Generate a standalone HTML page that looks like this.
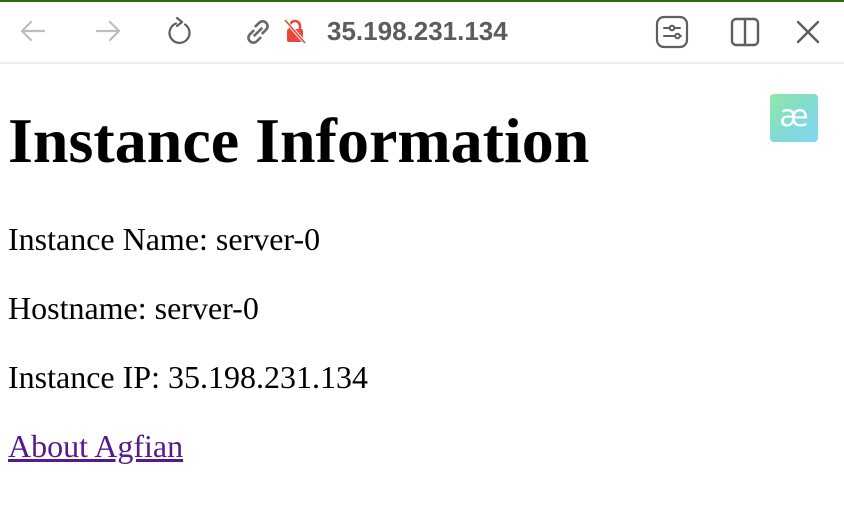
<!DOCTYPE html>
<html><head><meta charset="utf-8">
<style>
html,body{margin:0;padding:0;width:844px;height:520px;overflow:hidden;background:#fff;font-family:"Liberation Serif",serif;}
.top{position:absolute;left:0;top:0;width:844px;height:2px;background:#2d6a0c;}
.bar{position:absolute;left:0;top:2px;width:844px;height:60px;background:#fff;}
.div{position:absolute;left:0;top:62px;width:844px;height:2px;background:#ececec;}
.url{position:absolute;left:327px;top:16px;font-family:"Liberation Sans",sans-serif;font-size:26px;font-weight:bold;color:#5c5c5c;line-height:30px;}
svg{position:absolute;}
.t{position:absolute;left:8px;line-height:1;color:#000;white-space:nowrap;}
h1{margin:0;font-size:64px;font-weight:bold;}
a{color:#551a8b;}
.badge{position:absolute;left:770px;top:94px;width:48px;height:48px;border-radius:4px;background:linear-gradient(135deg,#8ee8a8,#7fd9d8 60%,#86d8f4);color:#fff;font-family:"DejaVu Sans",sans-serif;font-size:30px;text-align:center;line-height:46px;}
</style></head><body>
<div class="top"></div>
<div class="bar"></div>
<div class="div"></div>
<svg style="left:18px;top:18px" width="30" height="26" viewBox="0 0 30 26"><path d="M26 13H4M13 4L4 13l9 9" fill="none" stroke="#bdbdbd" stroke-width="2.2" stroke-linecap="round" stroke-linejoin="round"/></svg>
<svg style="left:93px;top:18px" width="30" height="26" viewBox="0 0 30 26"><path d="M4 13h22M17 4l9 9-9 9" fill="none" stroke="#bdbdbd" stroke-width="2.2" stroke-linecap="round" stroke-linejoin="round"/></svg>
<svg style="left:166px;top:15px" width="30" height="32" viewBox="0 0 30 32"><path d="M19 9.5A10 10 0 1 1 10 8.5" fill="none" stroke="#5e5e5e" stroke-width="2.2" stroke-linecap="round"/><path d="M11 3l5 4-5 4" fill="none" stroke="#5e5e5e" stroke-width="2.2" stroke-linecap="round" stroke-linejoin="round"/></svg>
<svg style="left:243px;top:17px" width="30" height="30" viewBox="0 0 26 26"><g fill="none" stroke="#6a6a6a" stroke-width="2.3" stroke-linecap="round"><path d="M11 8l3-3a4.2 4.2 0 0 1 6 6l-3 3"/><path d="M15 18l-3 3a4.2 4.2 0 0 1-6-6l3-3"/><path d="M10 16l6-6"/></g></svg>
<svg style="left:282px;top:17px" width="26" height="28" viewBox="0 0 26 28"><path d="M8 13V9a5 5 0 0 1 10 0v4" fill="none" stroke="#e8493a" stroke-width="2.6"/><rect x="5" y="12" width="16" height="13" rx="2" fill="#e8493a"/><path d="M3 3l20 23" stroke="#fff" stroke-width="3.5"/><path d="M3 3l20 23" stroke="#e8493a" stroke-width="1.6"/></svg>
<div class="url">35.198.231.134</div>
<svg style="left:654px;top:15px" width="36" height="34" viewBox="0 0 36 34"><rect x="3" y="2" width="30" height="30" rx="7" fill="none" stroke="#5e5e5e" stroke-width="2.2"/><g stroke="#5e5e5e" stroke-width="2" fill="none" stroke-linecap="round"><path d="M10 13h5M21 13h5M10 21h11M27 21h-1"/><circle cx="18" cy="13" r="2.3"/><circle cx="23.5" cy="21" r="2.3"/></g></svg>
<svg style="left:729px;top:16px" width="32" height="32" viewBox="0 0 32 32"><rect x="3" y="3" width="26" height="26" rx="4" fill="none" stroke="#5e5e5e" stroke-width="2.4"/><path d="M16 3v26" stroke="#5e5e5e" stroke-width="2.4"/></svg>
<svg style="left:794px;top:18px" width="28" height="28" viewBox="0 0 28 28"><path d="M4 4l20 20M24 4L4 24" stroke="#5e5e5e" stroke-width="2.4" stroke-linecap="round"/></svg>
<div class="badge">æ</div>
<div class="t" style="top:109px"><h1>Instance Information</h1></div>
<div class="t" style="top:223px;font-size:32px">Instance Name: server-0</div>
<div class="t" style="top:292px;font-size:32px">Hostname: server-0</div>
<div class="t" style="top:361px;font-size:32px">Instance IP: 35.198.231.134</div>
<div class="t" style="top:430px;font-size:32px"><a href="#">About Agfian</a></div>
</body></html>
